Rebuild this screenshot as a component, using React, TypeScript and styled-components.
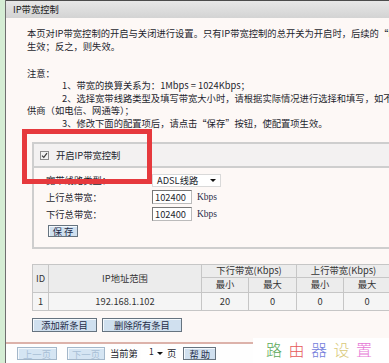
import styled, { createGlobalStyle } from "styled-components";

const GlobalStyle = createGlobalStyle`
  html, body {
    margin: 0;
    padding: 0;
    background: #fff;
  }
  body {
    width: 389px;
    height: 363px;
    overflow: hidden;
    font-family: "Noto Sans CJK SC", "Liberation Sans", sans-serif;
    color: #1d1f2e;
  }
`;

const FONT = 9.3;

const Page = styled.div`
  position: relative;
  display: flex;
  width: 389px;
  height: 363px;
  overflow: hidden;
`;

const GreenStrip = styled.div`
  width: 5px;
  flex-shrink: 0;
  background: #d5edd4;
`;

const Frame = styled.div`
  flex: 1;
  min-width: 0;
  display: flex;
  flex-direction: column;
  border-left: 1px solid #6f6f6f;
  background: #fdf8f6;
  overflow: hidden;
`;

const TitleBar = styled.div`
  height: 17px;
  line-height: 17px;
  border-top: 1px solid #4b4b4b;
  padding-left: 7px;
  font-size: ${FONT}px;
  color: #1a1a1a;
  background: linear-gradient(#e7e7e7, #d3d3d3);
  white-space: nowrap;
`;

const Body = styled.div`
  flex: 1;
  width: 520px;
  padding: 8.5px 0 0 21px;
  font-size: ${FONT}px;
`;

const Intro = styled.div`
  line-height: 13px;
  white-space: nowrap;
`;

const Note = styled.div`
  margin-top: 14px;
  line-height: 12.5px;
  white-space: nowrap;
`;

const NoteLine = styled.div<{ $indent?: number }>`
  padding-left: ${p => p.$indent ?? 0}px;
`;

const Box = styled.div`
  margin: 13px 0 0 5px;
  border-top: 2px solid #cecece;
  border-left: 2px solid #cecece;
  border-bottom: 2px solid #cecece;
`;

const CheckRow = styled.div`
  display: flex;
  align-items: center;
  gap: 7px;
  height: 22px;
  padding-left: 6px;
  background: #f3f1f1;
  border-bottom: 2px solid #cecece;
`;

const CheckMark = styled.span`
  display: flex;
  align-items: center;
  justify-content: center;
  width: 9px;
  height: 9px;
  box-sizing: border-box;
  border: 1px solid #8c8c8c;
  background: #f2f2f2;
`;

const Form = styled.div`
  display: grid;
  grid-template-columns: 106px auto;
  grid-auto-rows: 17px;
  align-items: center;
  padding: 3.5px 0 7.5px 12px;
`;

const FieldLabel = styled.div`
  white-space: nowrap;
`;

const SelectBox = styled.div<{ $w: number }>`
  display: flex;
  align-items: center;
  justify-content: space-between;
  width: ${p => p.$w}px;
  height: 13px;
  box-sizing: border-box;
  padding: 0 4px 0 4px;
  background: #fff;
  border: 1px solid #d9d9d9;
  font-size: ${FONT}px;
`;

const Arrow = styled.span`
  width: 0;
  height: 0;
  border-left: 3px solid transparent;
  border-right: 3px solid transparent;
  border-top: 3px solid #111;
`;

const InputLine = styled.div`
  display: flex;
  align-items: center;
  gap: 5px;
`;

const TextInput = styled.div`
  width: 40px;
  height: 14px;
  box-sizing: border-box;
  padding-left: 2px;
  line-height: 12px;
  background: #fff;
  border: 1px solid #777;
  border-right-color: #bbb;
  border-bottom-color: #bbb;
  font-size: ${FONT}px;
`;

const Unit = styled.span`
  font-family: "Liberation Serif", serif;
  font-size: 9.5px;
  color: #2a2d4a;
`;

const Button = styled.button<{ $w: number; $disabled?: boolean }>`
  width: ${p => p.$w}px;
  height: 14px;
  padding: 0;
  box-sizing: border-box;
  font-family: "Noto Sans CJK SC", sans-serif;
  font-size: ${FONT}px;
  line-height: 12px;
  color: ${p => (p.$disabled ? "#a8bfd6" : "#1f2c48")};
  background: ${p => (p.$disabled ? "#d5e5f3" : "#d0e0ef")};
  border: 1px solid ${p => (p.$disabled ? "#a3b7ca" : "#66737f")};
  box-shadow: inset 1px 1px 0 #f4f9fd;
  cursor: default;
`;

const SaveButton = styled(Button)`
  height: 12px;
  margin-left: 2px;
  line-height: 10px;
`;

const Table = styled.table`
  margin: 15px 0 0 5px;
  width: 358px;
  table-layout: fixed;
  border-collapse: collapse;
  font-size: ${FONT}px;
  color: #333;
`;

const Cell = styled.td<{ $head?: boolean; $h: number }>`
  height: ${p => p.$h}px;
  padding: 0;
  text-align: center;
  font-weight: 400;
  border: 1px solid #c6c6c6;
  background: ${p => (p.$head ? "#ececec" : "#f5f5f5")};
  white-space: nowrap;
  line-height: 1;
`;

const ButtonRow = styled.div`
  display: flex;
  gap: 5px;
  margin: 7px 0 0 5px;
`;

const BottomBar = styled.div`
  display: flex;
  align-items: flex-start;
  height: 21px;
  padding: 3px 0 0 11px;
  box-sizing: border-box;
  border-top: 2px solid #dcb2aa;
  background: #fefefe;
  font-size: ${FONT}px;
  white-space: nowrap;
`;

const PagerButton = styled(Button)<{ $ml?: number }>`
  height: 13px;
  margin-left: ${p => p.$ml ?? 0}px;
`;

const BarText = styled.span<{ $ml?: number }>`
  margin-left: ${p => p.$ml ?? 0}px;
  line-height: 13px;
`;

const PageSelect = styled.div`
  display: flex;
  align-items: flex-start;
  justify-content: space-between;
  width: 24px;
  height: 13px;
  margin-left: 3px;
  padding: 0 2px 0 8px;
  box-sizing: border-box;
  background: #fff;
  font-size: 8.5px;
  line-height: 9px;
  & > span:last-child {
    margin-top: 5px;
  }
`;

const Highlight = styled.div`
  position: absolute;
  left: 22px;
  top: 129px;
  width: 130px;
  height: 55px;
  box-sizing: border-box;
  border: 5px solid #e6393d;
`;

const Watermark = styled.div`
  position: absolute;
  right: 0;
  bottom: 0;
  width: 136px;
  height: 25px;
  padding-left: 13px;
  box-sizing: border-box;
  background: #fff;
  font-family: "Noto Sans CJK SC", sans-serif;
  font-size: 16px;
  font-weight: 200;
  line-height: 22px;
  letter-spacing: 6.5px;
  white-space: nowrap;
`;

const Mark = styled.span<{ $c: string }>`
  color: ${p => p.$c};
  opacity: 0.85;
`;

const marks = [
  { t: "路", c: "#3f9b3c" },
  { t: "由", c: "#e23b3b" },
  { t: "器", c: "#5b68d6" },
  { t: "设", c: "#d3c163" },
  { t: "置", c: "#e25fcf" },
];

export default function App() {
  return (
    <>
      <GlobalStyle />
      <Page>
        <GreenStrip />
        <Frame>
          <TitleBar>IP带宽控制</TitleBar>
          <Body>
            <Intro>
              <div>本页对IP带宽控制的开启与关闭进行设置。只有IP带宽控制的总开关为开启时，后续的“IP带宽控制规则”才能生效；</div>
              <div>生效；反之，则失效。</div>
            </Intro>
            <Note>
              <NoteLine>注意：</NoteLine>
              <NoteLine $indent={35}>1、带宽的换算关系为：1Mbps = 1024Kbps；</NoteLine>
              <NoteLine $indent={35}>2、选择宽带线路类型及填写带宽大小时，请根据实际情况进行选择和填写，如不清楚，请咨询您的带宽提</NoteLine>
              <NoteLine>供商（如电信、网通等）；</NoteLine>
              <NoteLine $indent={35}>3、修改下面的配置项后，请点击“保存”按钮，使配置项生效。</NoteLine>
            </Note>
            <Box>
              <CheckRow>
                <CheckMark>
                  <svg width="7" height="7" viewBox="0 0 7 7">
                    <path d="M1 3.6 L2.8 5.4 L6 1.2" fill="none" stroke="#3a3a3a" strokeWidth="1.2" />
                  </svg>
                </CheckMark>
                <span>开启IP带宽控制</span>
              </CheckRow>
              <Form>
                <FieldLabel>宽带线路类型：</FieldLabel>
                <SelectBox $w={69}>
                  <span>ADSL线路</span>
                  <Arrow />
                </SelectBox>
                <FieldLabel>上行总带宽：</FieldLabel>
                <InputLine>
                  <TextInput>102400</TextInput>
                  <Unit>Kbps</Unit>
                </InputLine>
                <FieldLabel>下行总带宽：</FieldLabel>
                <InputLine>
                  <TextInput>102400</TextInput>
                  <Unit>Kbps</Unit>
                </InputLine>
                <div>
                  <SaveButton $w={30}>保 存</SaveButton>
                </div>
              </Form>
            </Box>
            <Table>
              <colgroup>
                <col style={{ width: 16 }} />
                <col style={{ width: 153 }} />
                <col style={{ width: 47 }} />
                <col style={{ width: 48 }} />
                <col style={{ width: 47 }} />
                <col style={{ width: 47 }} />
              </colgroup>
              <tbody>
                <tr>
                  <Cell as="th" $head $h={12} rowSpan={2}>ID</Cell>
                  <Cell as="th" $head $h={12} rowSpan={2}>IP地址范围</Cell>
                  <Cell as="th" $head $h={12} colSpan={2}>下行带宽(Kbps)</Cell>
                  <Cell as="th" $head $h={12} colSpan={2}>上行带宽(Kbps)</Cell>
                </tr>
                <tr>
                  <Cell $head $h={14}>最小</Cell>
                  <Cell $head $h={14}>最大</Cell>
                  <Cell $head $h={14}>最小</Cell>
                  <Cell $head $h={14}>最大</Cell>
                </tr>
                <tr>
                  <Cell $h={17}>1</Cell>
                  <Cell $h={17}>192.168.1.102</Cell>
                  <Cell $h={17}>20</Cell>
                  <Cell $h={17}>0</Cell>
                  <Cell $h={17}>0</Cell>
                  <Cell $h={17}>0</Cell>
                </tr>
              </tbody>
            </Table>
            <ButtonRow>
              <Button $w={65}>添加新条目</Button>
              <Button $w={80}>删除所有条目</Button>
            </ButtonRow>
          </Body>
          <BottomBar>
            <PagerButton $w={40} $disabled>上一页</PagerButton>
            <PagerButton $w={38} $disabled $ml={10}>下一页</PagerButton>
            <BarText $ml={5}>当前第</BarText>
            <PageSelect>
              <span>1</span>
              <Arrow />
            </PageSelect>
            <BarText $ml={2}>页</BarText>
            <PagerButton $w={33} $ml={7}>帮 助</PagerButton>
          </BottomBar>
        </Frame>
        <Highlight />
        <Watermark>
          {marks.map(m => (
            <Mark key={m.t} $c={m.c}>{m.t}</Mark>
          ))}
        </Watermark>
      </Page>
    </>
  );
}
